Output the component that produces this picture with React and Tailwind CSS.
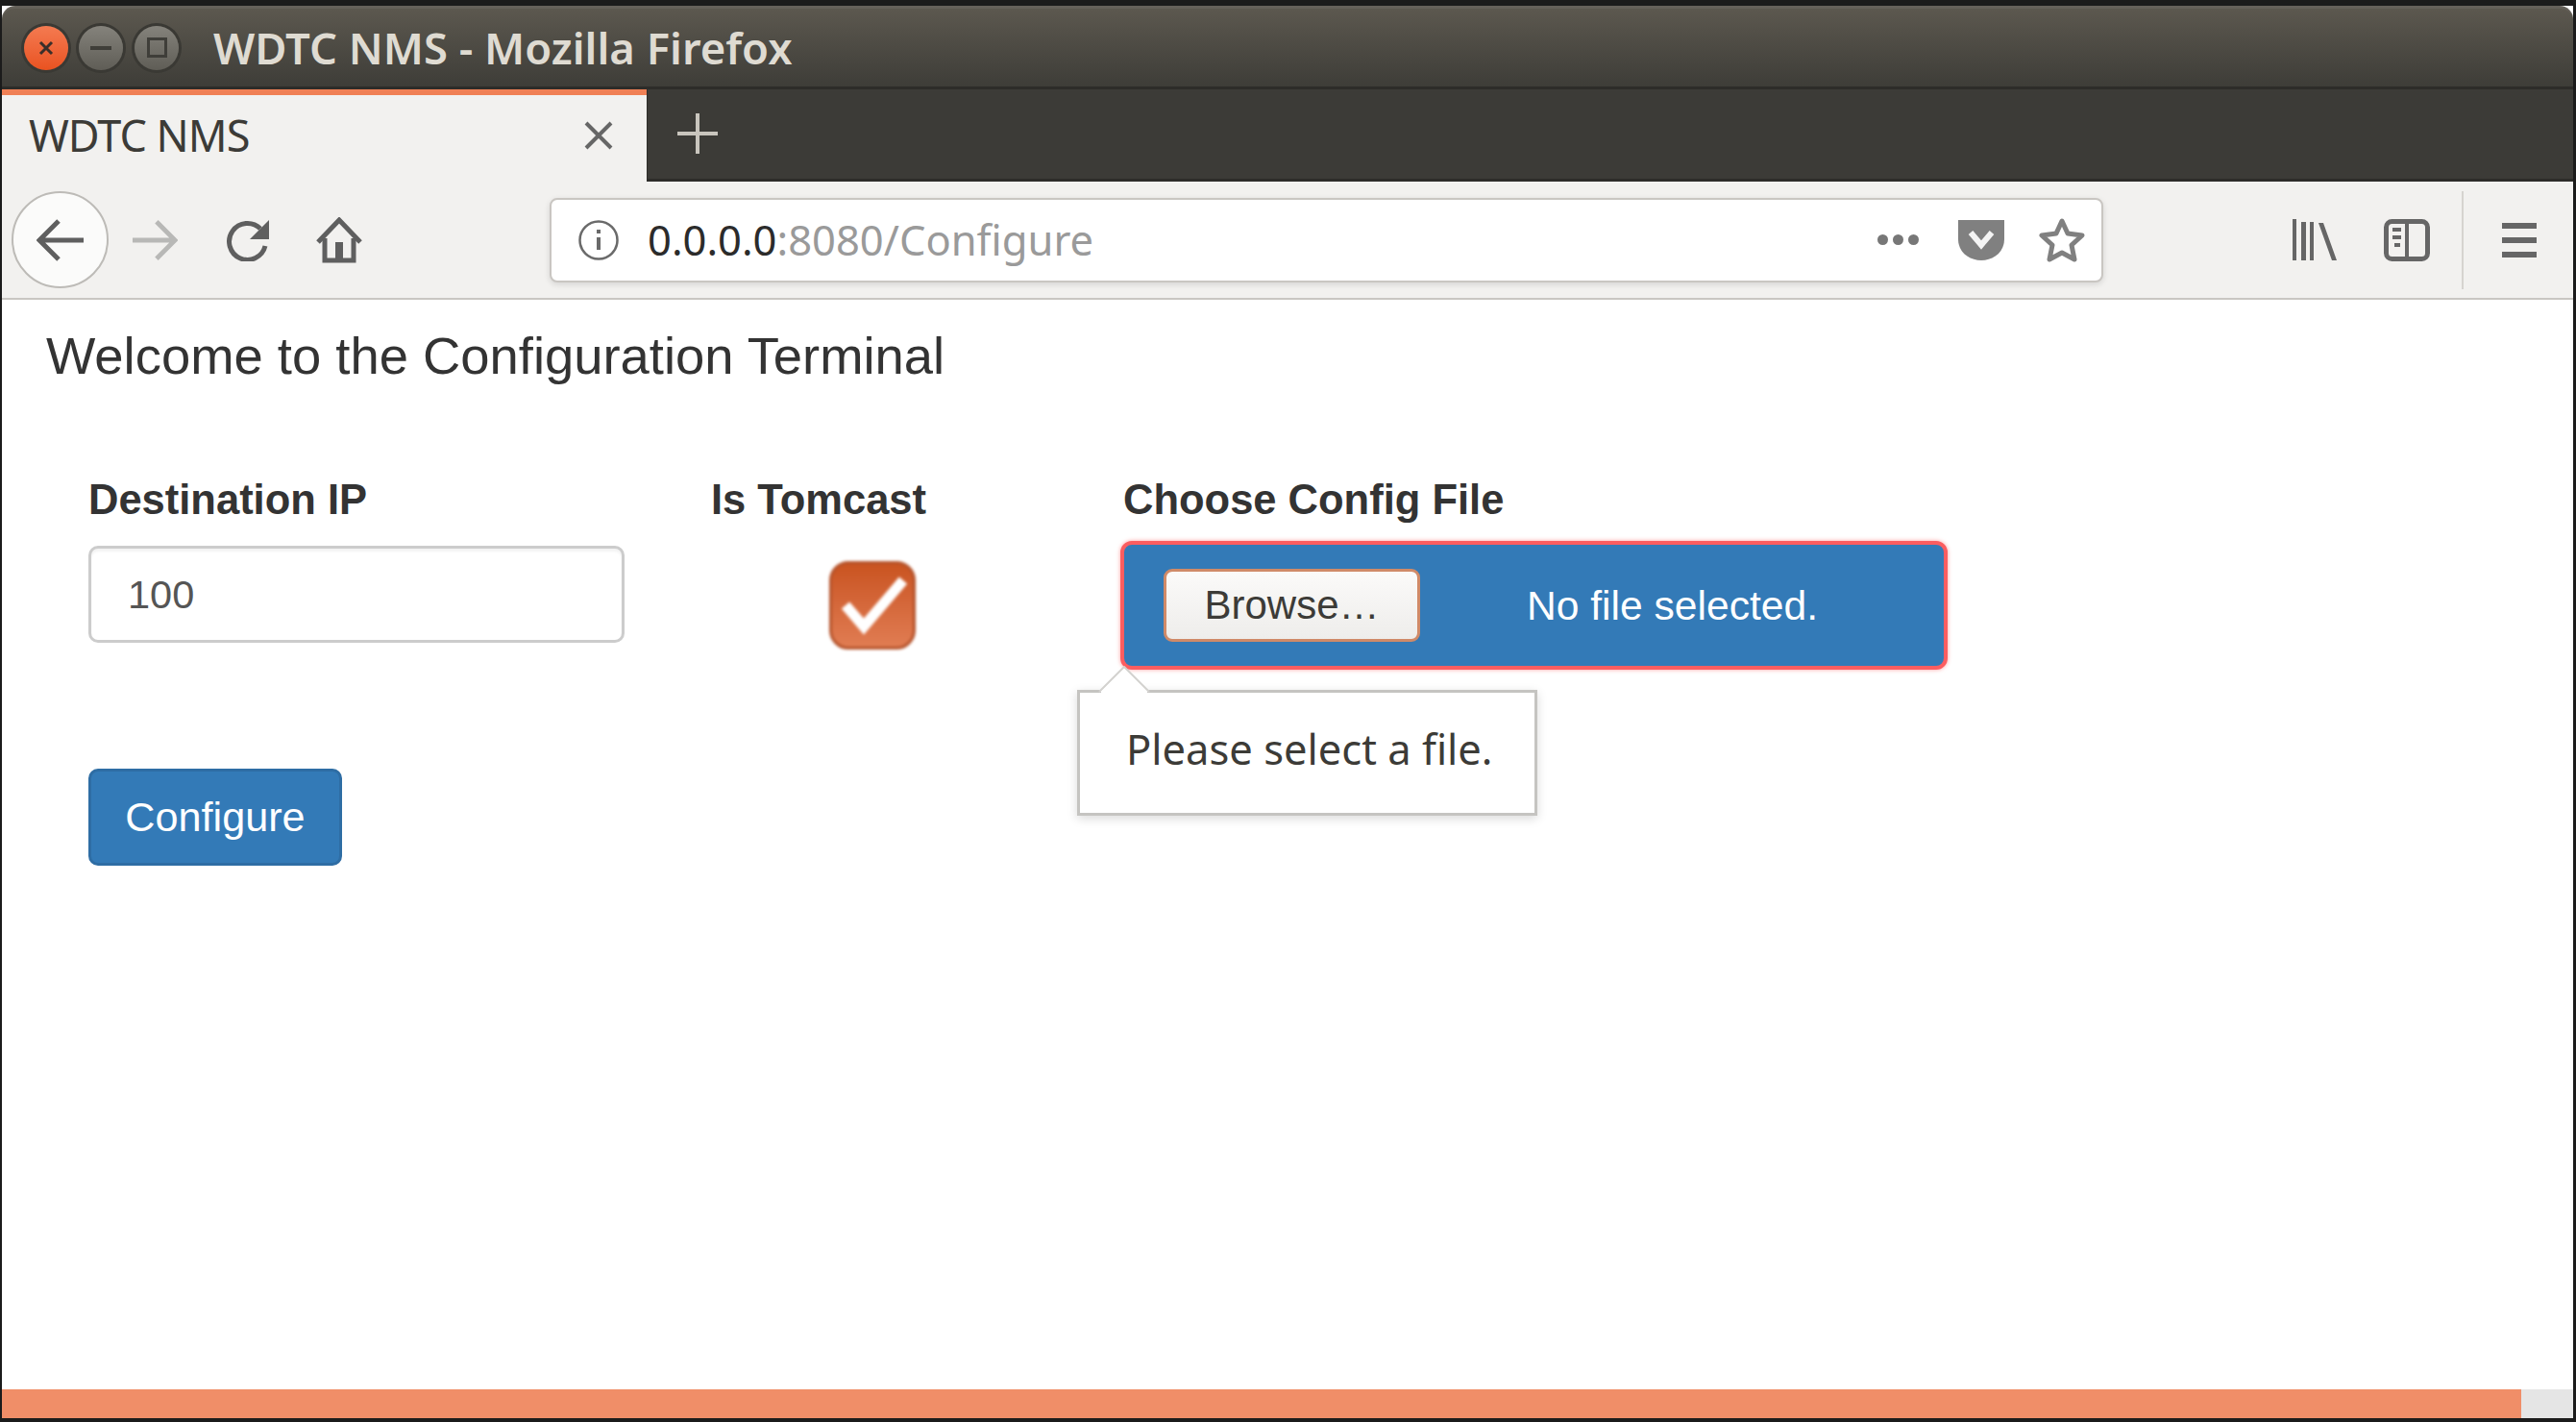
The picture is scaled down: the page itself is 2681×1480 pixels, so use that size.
import React from 'react';

const SANS = 'font-["Liberation_Sans",Arial,sans-serif]';
const UI = 'font-["Noto_Sans","Open_Sans",sans-serif]';

// --- Window buttons ---
const WindowButton = ({ className, children }) => (
  <div className={`w-[46px] h-[46px] rounded-full flex items-center justify-center ring-[3px] ring-[#3a3934] ${className}`}>
    {children}
  </div>
);

const TitleBar = () => (
  <div className="h-[84px] shrink-0 flex items-center pl-[23px] rounded-t-[14px] border-t-[3px] border-[#65615a] bg-gradient-to-b from-[#5c584f] to-[#3e3d38]">
    <WindowButton className="bg-gradient-to-b from-[#f47a50] to-[#e9521f]">
      <svg width="18" height="18" viewBox="0 0 18 18" stroke="#3a2f2a" strokeWidth="3"><path d="M3 3l12 12M15 3L3 15" /></svg>
    </WindowButton>
    <WindowButton className="ml-[11px] bg-gradient-to-b from-[#85837c] to-[#5f5d56]">
      <div className="w-[22px] h-[4px] bg-[#3f3e39]" />
    </WindowButton>
    <WindowButton className="ml-[12px] bg-gradient-to-b from-[#85837c] to-[#5f5d56]">
      <div className="w-[21px] h-[21px] border-[3px] border-[#3f3e39]" />
    </WindowButton>
    <span className={`ml-[36px] text-[45.4px] leading-none font-semibold text-[#dfdbd2] whitespace-nowrap ${UI}`}>WDTC NMS - Mozilla Firefox</span>
  </div>
);

// --- Tab strip ---
const TabStrip = () => (
  <div className="h-[99px] shrink-0 flex bg-[#3c3b37] border-t-[3px] border-b-[3px] border-[#2d2c29]">
    <div className="w-[672px] h-[96px] flex flex-col bg-[#f2f1ef] border-r border-[#2d2c29]">
      <div className="h-[6px] bg-[#f08055]" />
      <div className="flex-1 flex items-center justify-between pl-[28px] pr-[34px] pb-[7px]">
        <span className={`text-[45px] leading-none text-[#3c3b37] tracking-[-1px] ${UI}`}>WDTC NMS</span>
        <svg width="32" height="32" viewBox="0 0 32 32" stroke="#666" strokeWidth="4"><path d="M3 3l26 26M29 3L3 29" /></svg>
      </div>
    </div>
    <svg className="ml-[31px] mt-[25px]" width="42" height="42" viewBox="0 0 42 42" stroke="#c9c5bd" strokeWidth="4"><path d="M21 0v42M0 21h42" /></svg>
  </div>
);

// --- Toolbar icons ---
const BackButton = () => (
  <div className="ml-[10px] w-[101px] h-[101px] shrink-0 rounded-full border-2 border-[#bdbbb7] bg-[#fbfbfa] flex items-center justify-center">
    <svg width="50" height="44" viewBox="0 0 50 44" fill="none" stroke="#5f5f5f" strokeWidth="5"><path d="M49 22H4M23 2L3 22l20 20" /></svg>
  </div>
);

const ForwardIcon = () => (
  <svg className="ml-[24px] shrink-0" width="48" height="44" viewBox="0 0 50 44" fill="none" stroke="#b8b8b6" strokeWidth="5"><path d="M1 22h45M27 2l20 20-20 20" /></svg>
);

const ReloadIcon = () => (
  <svg className="ml-[50px] shrink-0" width="46" height="44" viewBox="0 0 46 44" fill="none"><path d="M36 10A19 19 0 1 0 41 28" stroke="#5f5f5f" strokeWidth="5" /><path d="M45 1v20H25z" fill="#5f5f5f" /></svg>
);

const HomeIcon = () => (
  <svg className="ml-[48px] shrink-0" width="48" height="48" viewBox="0 0 48 48" fill="none" stroke="#5f5f5f" strokeWidth="5"><path d="M2 26L24 3l22 23" /><path d="M9 22v23h30V22" /><path d="M20 46V26h8v20" fill="#5f5f5f" stroke="none" /></svg>
);

const InfoIcon = () => (
  <svg className="shrink-0" width="42" height="42" viewBox="0 0 42 42" fill="none" stroke="#6a6a6a" strokeWidth="2.5"><circle cx="21" cy="21" r="19.5" /><path d="M21 18v13" strokeWidth="4" /><path d="M21 10v4" strokeWidth="4" /></svg>
);

const PocketIcon = () => (
  <svg width="48" height="42" viewBox="0 0 48 42"><path d="M0 0h48v20c0 14-12 22-24 22S0 34 0 20z" fill="#808080" /><path d="M13 13l11 13 11-13" fill="none" stroke="#f4f4f4" strokeWidth="6" /></svg>
);

const StarIcon = () => (
  <svg width="48" height="48" viewBox="0 0 48 48" fill="none" stroke="#808080" strokeWidth="5" strokeLinejoin="round"><path d="M24 4l6 13 15 2-11 10 3 15-13-7-13 7 3-15L3 19l15-2z" /></svg>
);

const LibraryIcon = () => (
  <svg className="ml-[197px] shrink-0" width="46" height="44" viewBox="0 0 46 44" fill="#666"><path d="M0 0h4v43H0zM9 3h5v40H9zM18 3h4v40h-4zM27 4h5l14 39h-5z" /></svg>
);

const SidebarIcon = () => (
  <svg className="ml-[49px] shrink-0" width="48" height="44" viewBox="0 0 48 44" fill="none"><rect x="2.5" y="2.5" width="43" height="39" rx="6" stroke="#666" strokeWidth="5" /><path d="M24 2v40" stroke="#666" strokeWidth="4" /><path d="M9 9h9v4H9zM9 17h9v4H9zM11 25h6v4h-6z" fill="#666" /></svg>
);

const MenuIcon = () => (
  <svg className="ml-[40px] shrink-0" width="36" height="36" viewBox="0 0 36 36" fill="#666"><path d="M0 0h36v6H0zM0 15h36v6H0zM0 30h36v6H0z" /></svg>
);

// --- Location bar ---
const UrlBar = () => (
  <div className="ml-[195px] w-[1617px] h-[88px] shrink-0 flex items-center pl-[28px] pr-[17px] bg-white rounded-[8px] border-2 border-[#c9c6c2] shadow-[0_2px_6px_rgba(0,0,0,0.12)]">
    <InfoIcon />
    <span className={`ml-[30px] text-[43.5px] leading-none text-[#2b2b2b] ${UI}`}>0.0.0.0<span className="text-[#9a9a9a]">:8080/Configure</span></span>
    <div className="ml-auto flex items-center gap-[1px]">
      <div className="w-[11px] h-[11px] rounded-full bg-[#777]" />
      <div className="ml-[4px] w-[11px] h-[11px] rounded-full bg-[#777]" />
      <div className="ml-[4px] w-[11px] h-[11px] rounded-full bg-[#777]" />
    </div>
    <div className="ml-[41px]"><PocketIcon /></div>
    <div className="ml-[36px]"><StarIcon /></div>
  </div>
);

const Toolbar = () => (
  <div className="h-[123px] shrink-0 flex items-center bg-[#f2f1ef] border-b-2 border-[#c9c6c2]">
    <BackButton />
    <ForwardIcon />
    <ReloadIcon />
    <HomeIcon />
    <UrlBar />
    <LibraryIcon />
    <SidebarIcon />
    <div className="ml-[33px] w-[2px] h-[102px] bg-[#d6d4d0] shrink-0" />
    <MenuIcon />
  </div>
);

// --- Form ---
const FieldLabel = ({ children }) => (
  <div className="h-[60px] text-[43.5px] leading-[60px] font-bold text-[#333] whitespace-nowrap">{children}</div>
);

const TomcastCheck = () => (
  <div className="mt-[34px] ml-[123px] w-[90px] h-[92px] rounded-[20px] border-[3px] border-[#b5532b] bg-gradient-to-b from-[#c9531f] to-[#e07c52] flex items-center justify-center blur-[1.5px]">
    <svg width="72" height="64" viewBox="0 0 72 64" fill="none" stroke="#fff" strokeWidth="11"><path d="M8 32l19 22L68 6" /></svg>
  </div>
);

const FileField = () => (
  <div className="relative mt-[13px] -ml-[3px]">
    <div className="w-[861px] h-[134px] flex items-center pl-[41px] rounded-[12px] bg-[#337ab7] border-[4px] border-[#fb5d60] shadow-[0_0_4px_rgba(255,90,90,0.6)]">
      <div className="w-[267px] h-[76px] flex items-center justify-center rounded-[9px] border-[3px] border-[#d08a68] bg-gradient-to-b from-[#fbfaf9] to-[#eeedeb] text-[42px] leading-none text-[#3c3b37]">Browse…</div>
      <span className="ml-[111px] text-[42.6px] leading-none text-white whitespace-nowrap">No file selected.</span>
    </div>
    {/* validation bubble sits over the page */}
    <div className={`absolute left-[-45px] top-[155px] w-[479px] h-[131px] flex items-center pl-[48px] pb-[8px] bg-white border-[3px] border-[#c5c4c1] shadow-[0_3px_10px_rgba(0,0,0,0.15)] text-[43.5px] leading-none text-[#3c3b37] whitespace-nowrap ${UI}`}>
      Please select a file.
      <svg className="absolute left-[18px] top-[-28px]" width="56" height="30" viewBox="0 0 56 30" fill="#fff" stroke="#d3d2cf" strokeWidth="2"><path d="M2 27L28 1l26 26" /><path d="M4 30h48V27L28 3 4 27z" stroke="none" /></svg>
    </div>
  </div>
);

const ConfigureForm = () => (
  <div className={SANS}>
    <h4 className="mt-[29px] ml-[46px] h-[60px] text-[54.4px] leading-[60px] font-normal text-[#333] whitespace-nowrap">Welcome to the Configuration Terminal</h4>
    <div className="mt-[89px] ml-[90px] flex h-[208px]">
      <div className="w-[648px]">
        <FieldLabel>Destination IP</FieldLabel>
        <div className="mt-[18px] w-[558px] h-[101px] flex items-center pl-[38px] bg-white rounded-[10px] border-[3px] border-[#ccc] text-[41.5px] leading-none text-[#555] shadow-[inset_0_3px_3px_rgba(0,0,0,0.05)]">100</div>
      </div>
      <div className="w-[429px]">
        <FieldLabel>Is Tomcast</FieldLabel>
        <TomcastCheck />
      </div>
      <div>
        <FieldLabel>Choose Config File</FieldLabel>
        <FileField />
      </div>
    </div>
    <button className="mt-[102px] ml-[90px] block w-[264px] h-[101px] rounded-[10px] bg-[#337ab7] border-[3px] border-[#2e6da4] text-[43.2px] leading-none text-white">Configure</button>
  </div>
);

export default function App() {
  return (
    <div className="w-[2681px] h-[1480px] overflow-hidden bg-[#1b1b1b] pt-[6px] pl-[2px] pr-[3px] pb-[4px]">
      <div className="h-full flex flex-col bg-white">
        <TitleBar />
        <TabStrip />
        <Toolbar />
        <div className="flex-1 min-h-0">
          <ConfigureForm />
        </div>
        <div className="h-[30px] shrink-0 flex">
          <div className="flex-1 bg-[#f08e68]" />
          <div className="w-[54px] bg-[#e5e5e5]" />
        </div>
      </div>
    </div>
  );
}
